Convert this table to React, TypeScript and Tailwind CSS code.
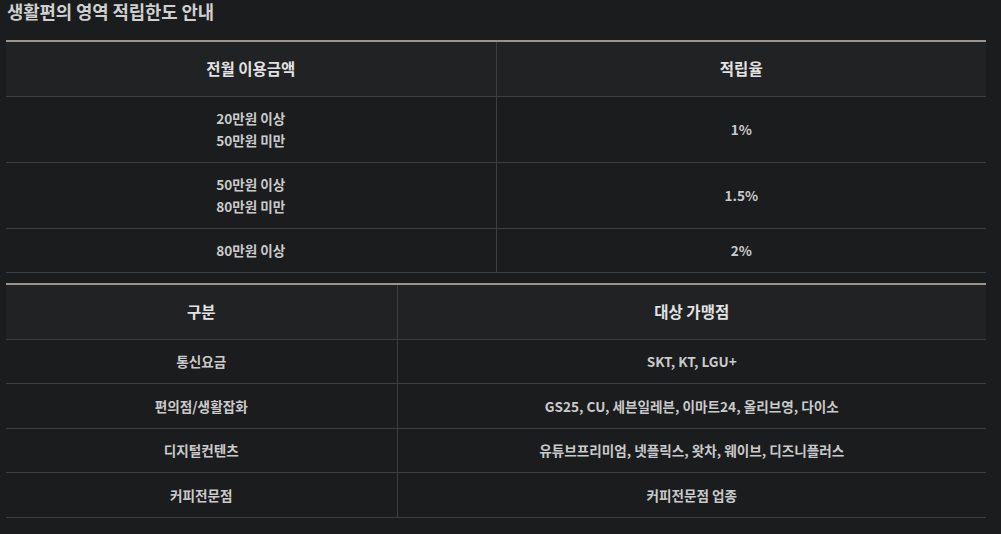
import React from "react";

const font = { fontFamily: '"Noto Sans CJK KR", "Noto Sans", sans-serif' };

export default function App() {
  const t1 = [
    { a: ["20만원 이상", "50만원 미만"], b: "1%" },
    { a: ["50만원 이상", "80만원 미만"], b: "1.5%" },
    { a: ["80만원 이상"], b: "2%" },
  ];
  const t2 = [
    ["통신요금", "SKT, KT, LGU+", "h-[44px]"],
    ["편의점/생활잡화", "GS25, CU, 세븐일레븐, 이마트24, 올리브영, 다이소", "h-[45px]"],
    ["디지털컨텐츠", "유튜브프리미엄, 넷플릭스, 왓차, 웨이브, 디즈니플러스", "h-[44px]"],
    ["커피전문점", "커피전문점 업종", "h-[45px]"],
  ];
  return (
    <div className="w-[1001px] h-[534px] bg-[#1b1c1e] overflow-hidden" style={font}>
      <div className="pl-[7px] h-[40px]">
        <h2 className="text-[17.8px] leading-[23px] font-bold text-[#cfcfcf] tracking-[-0.1px]">
          생활편의 영역 적립한도 안내
        </h2>
      </div>
      <div className="ml-[6px] w-[980px]">
        <table className="w-full border-collapse border-t-2 border-[#9c948a]">
          <thead>
            <tr className="bg-[#212224] h-[55px]">
              <th className="w-[490px] border-b border-r border-[#3d3e40] text-[15.5px] font-bold text-[#e2e2e2]">전월 이용금액</th>
              <th className="border-b border-[#3d3e40] text-[15.5px] font-bold text-[#e2e2e2]">적립율</th>
            </tr>
          </thead>
          <tbody>
            {t1.map((r, i) => (
              <tr key={i} className={r.a.length > 1 ? "h-[66px]" : "h-[44px]"}>
                <td className="border-b border-r border-[#3d3e40] text-center text-[13.6px] leading-[22px] font-bold text-[#cacaca]">
                  {r.a.map((l, j) => (
                    <div key={j}>{l}</div>
                  ))}
                </td>
                <td className="border-b border-[#3d3e40] text-center text-[13.6px] font-bold text-[#cacaca]">{r.b}</td>
              </tr>
            ))}
          </tbody>
        </table>
        <table className="w-full border-collapse border-t-2 border-[#9c948a] mt-[10px]">
          <thead>
            <tr className="bg-[#212224] h-[56px]">
              <th className="w-[391px] border-b border-r border-[#3d3e40] text-[15.5px] font-bold text-[#e2e2e2]">구분</th>
              <th className="border-b border-[#3d3e40] text-[15.5px] font-bold text-[#e2e2e2]">대상 가맹점</th>
            </tr>
          </thead>
          <tbody>
            {t2.map((r, i) => (
              <tr key={i} className={r[2]}>
                <td className="border-b border-r border-[#3d3e40] text-center text-[13.6px] font-bold text-[#cacaca]">{r[0]}</td>
                <td className="border-b border-[#3d3e40] text-center text-[13.6px] font-bold text-[#cacaca]">{r[1]}</td>
              </tr>
            ))}
          </tbody>
        </table>
      </div>
    </div>
  );
}
